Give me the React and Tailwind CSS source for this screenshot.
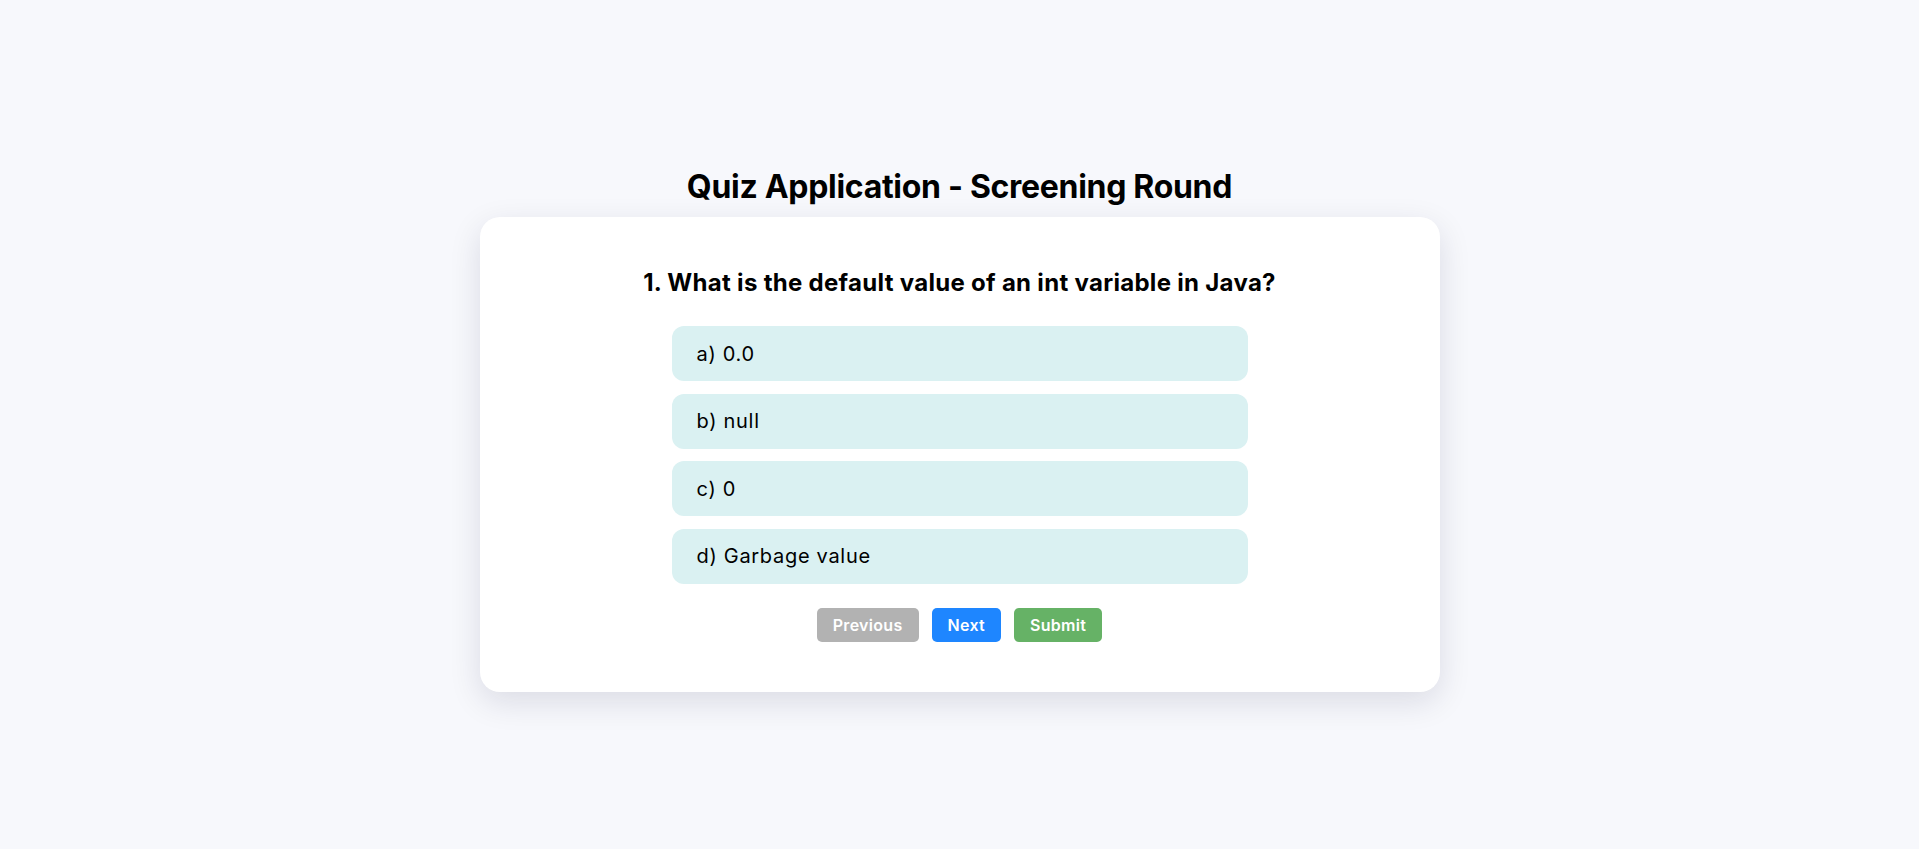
const options = ['a) 0.0', 'b) null', 'c) 0', 'd) Garbage value']

function NavButton({ label, color }) {
  return (
    <button
      type="button"
      className={`h-[34px] px-[16px] rounded-[5px] text-white text-[16px] font-semibold tracking-[0.3px] ${color}`}
    >
      {label}
    </button>
  )
}

export default function App() {
  return (
    <div
      className="min-h-screen bg-[#f7f8fc] flex flex-col items-center justify-center text-black"
      style={{ fontFamily: 'Inter, "Open Sans", sans-serif' }}
    >
      <h1 className="text-[32px] leading-[60px] font-bold tracking-[-0.3px]">Quiz Application - Screening Round</h1>

      <div className="w-[960px] bg-white rounded-[20px] shadow-[0_10px_32px_rgba(20,20,60,0.12)] pt-[48px] pb-[50px] flex flex-col items-center">
        <h2 className="text-[24px] leading-[36px] font-bold tracking-[0.3px]">
          1. What is the default value of an int variable in Java?
        </h2>

        <div className="mt-[25px] w-[576px] flex flex-col gap-[12.5px]">
          {options.map((opt) => (
            <div
              key={opt}
              className="h-[55px] flex items-center px-[25px] rounded-[12px] bg-[#daf1f2] text-[20px] tracking-[0.7px]"
            >
              {opt}
            </div>
          ))}
        </div>

        <div className="mt-[24.5px] flex gap-[13px]">
          <NavButton label="Previous" color="bg-[#b2b2b2]" />
          <NavButton label="Next" color="bg-[#1e86ff]" />
          <NavButton label="Submit" color="bg-[#66b266]" />
        </div>
      </div>
    </div>
  )
}
